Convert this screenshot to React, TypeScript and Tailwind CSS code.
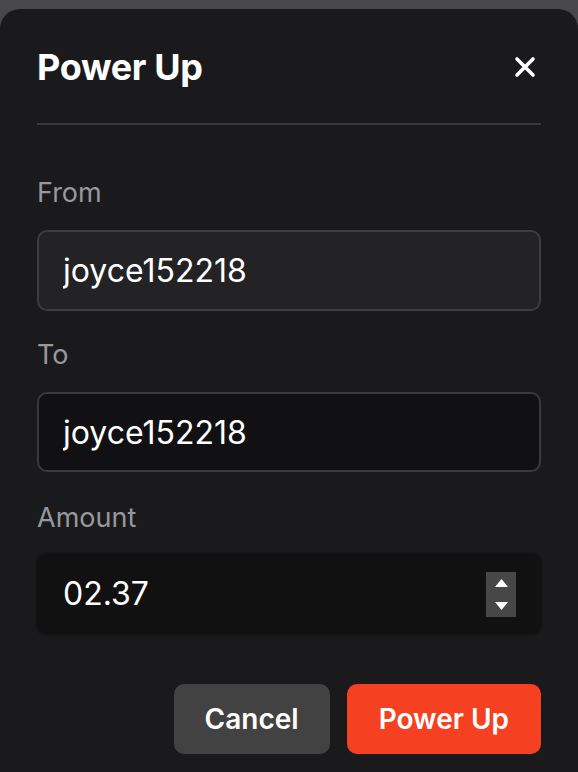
import { useState } from 'react';

function CloseIcon() {
  return (
    <svg width="22" height="22" viewBox="0 0 22 22" fill="none">
      <path d="M3 3L19 19M19 3L3 19" stroke="white" strokeWidth="3.6" strokeLinecap="round" />
    </svg>
  );
}

function Spinner() {
  return (
    <div className="flex h-[45px] w-[30px] flex-col items-center justify-center gap-[15px] bg-[#474747]">
      <svg width="13" height="8" viewBox="0 0 13 8">
        <path d="M6.5 0L13 8H0Z" fill="white" />
      </svg>
      <svg width="13" height="8" viewBox="0 0 13 8">
        <path d="M0 0H13L6.5 8Z" fill="white" />
      </svg>
    </div>
  );
}

export default function App() {
  const [from, setFrom] = useState('joyce152218');
  const [to, setTo] = useState('joyce152218');
  const [amount, setAmount] = useState('02.37');

  return (
    <div className="min-h-screen bg-[#48484a] pt-[9px] font-[Inter,sans-serif]">
      <div className="min-h-[763px] rounded-t-[20px] bg-[#1a1a1c] px-[37px] pt-[36px]">
        <div className="flex items-center justify-between border-b-2 border-[#38383c] pb-[34px]">
          <h2 className="text-[36px] font-bold leading-[44px] tracking-[-0.01em] text-white">Power Up</h2>
          <button className="mr-[5px] flex items-center justify-center">
            <CloseIcon />
          </button>
        </div>

        <label className="mt-[52px] block text-[27px] leading-[32px] text-[#98989e]">From</label>
        <input
          value={from}
          onChange={(e) => setFrom(e.target.value)}
          className="mt-[21px] h-[81px] w-full rounded-[10px] border-2 border-[#3c3c41] bg-[#232326] px-[24px] text-[32px] text-white outline-none"
        />

        <label className="mt-[28px] block text-[27px] leading-[32px] text-[#98989e]">To</label>
        <input
          value={to}
          onChange={(e) => setTo(e.target.value)}
          className="mt-[21px] h-[80px] w-full rounded-[10px] border-2 border-[#3a3a3e] bg-[#111113] px-[24px] text-[32px] text-white outline-none"
        />

        <label className="mt-[30px] block text-[27px] leading-[32px] text-[#98989e]">Amount</label>
        <div className="mt-[18px] -mx-[2px] rounded-[12px] bg-[#151515] p-[2px]">
          <div className="flex h-[80px] items-center rounded-[10px] bg-[#111111] pl-[26px] pr-[25px]">
            <input
              value={amount}
              onChange={(e) => setAmount(e.target.value)}
              className="min-w-0 flex-1 bg-transparent text-[32px] text-white outline-none"
            />
            <Spinner />
          </div>
        </div>

        <div className="mt-[48px] flex justify-end gap-[17px]">
          <button className="h-[70px] rounded-[10px] bg-[#424242] px-[31px] text-[28px] font-semibold text-white">
            Cancel
          </button>
          <button className="h-[70px] rounded-[10px] bg-[#f54021] px-[32px] text-[28px] font-semibold text-white">
            Power Up
          </button>
        </div>
      </div>
    </div>
  );
}
